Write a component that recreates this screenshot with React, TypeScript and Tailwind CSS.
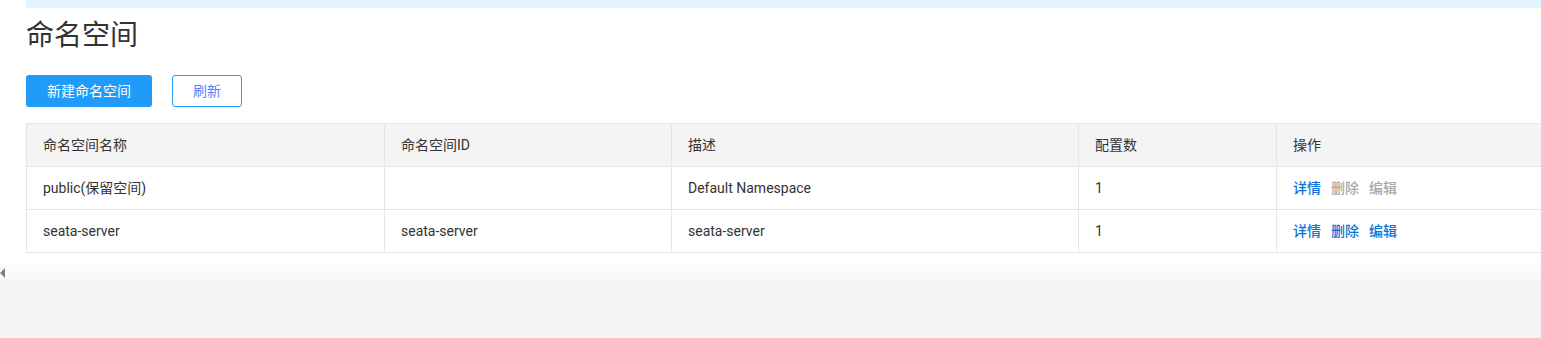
import React from 'react';

type Row = {
  name: string;
  id: string;
  desc: string;
  count: string;
  locked: boolean;
};

const rows: Row[] = [
  { name: 'public(保留空间)', id: '', desc: 'Default Namespace', count: '1', locked: true },
  { name: 'seata-server', id: 'seata-server', desc: 'seata-server', count: '1', locked: false },
];

const cols = ['命名空间名称', '命名空间ID', '描述', '配置数', '操作'];

const cell = 'h-[42px] flex items-center pl-[16px] border-r border-[#e6e6e6] last:border-r-0';

export default function App() {
  return (
    <div
      className="w-[1541px] h-[338px] overflow-hidden bg-white text-[#333]"
      style={{ fontFamily: 'Roboto, "Noto Sans CJK SC", sans-serif' }}
    >
      <div className="pl-[26px]">
        {/* 顶部提示条 */}
        <div className="h-[8px] bg-[#e5f3fe] rounded-bl-[3px]" />

        <h1 className="mt-[10px] text-[28px] leading-[36px] font-normal text-[#333]">命名空间</h1>

        <div className="mt-[21px] flex gap-[20px]">
          <button className="h-[32px] w-[126px] rounded-[3px] bg-[#209bfa] text-white text-[14px]">
            新建命名空间
          </button>
          <button className="h-[32px] w-[70px] rounded-[3px] border border-[#209bfa] bg-white text-[#5584ff] text-[14px]">
            刷新
          </button>
        </div>

        {/* 列表 */}
        <div className="mt-[16px] w-[1600px] border-t border-l border-[#e6e6e6] text-[14px]">
          <div className="grid grid-cols-[358px_287px_407px_198px_350px] bg-[#f4f4f4] border-b border-[#e6e6e6]">
            {cols.map((c) => (
              <div key={c} className={cell}>
                {c}
              </div>
            ))}
          </div>
          {rows.map((r) => (
            <div
              key={r.name}
              className="grid grid-cols-[358px_287px_407px_198px_350px] border-b border-[#e6e6e6]"
            >
              <div className={cell}>{r.name}</div>
              <div className={cell}>{r.id}</div>
              <div className={cell}>{r.desc}</div>
              <div className={cell}>{r.count}</div>
              <div className={`${cell} gap-[10px] font-medium`}>
                <a className="text-[#0a74d8] cursor-pointer">详情</a>
                <a className={r.locked ? 'text-[#a8a8a8]' : 'text-[#0a74d8] cursor-pointer'}>删除</a>
                <a className={r.locked ? 'text-[#a8a8a8]' : 'text-[#0a74d8] cursor-pointer'}>编辑</a>
              </div>
            </div>
          ))}
        </div>
      </div>

      {/* 横向滚动条 */}
      <div className="mt-[12px] h-[15px] bg-[#fafafa] flex items-center">
        <svg width="6" height="10" viewBox="0 0 6 10">
          <path d="M5 0 L0 5 L5 10 Z" fill="#808080" />
        </svg>
      </div>
      <div className="h-[60px] bg-[#f3f3f3]" />
    </div>
  );
}
